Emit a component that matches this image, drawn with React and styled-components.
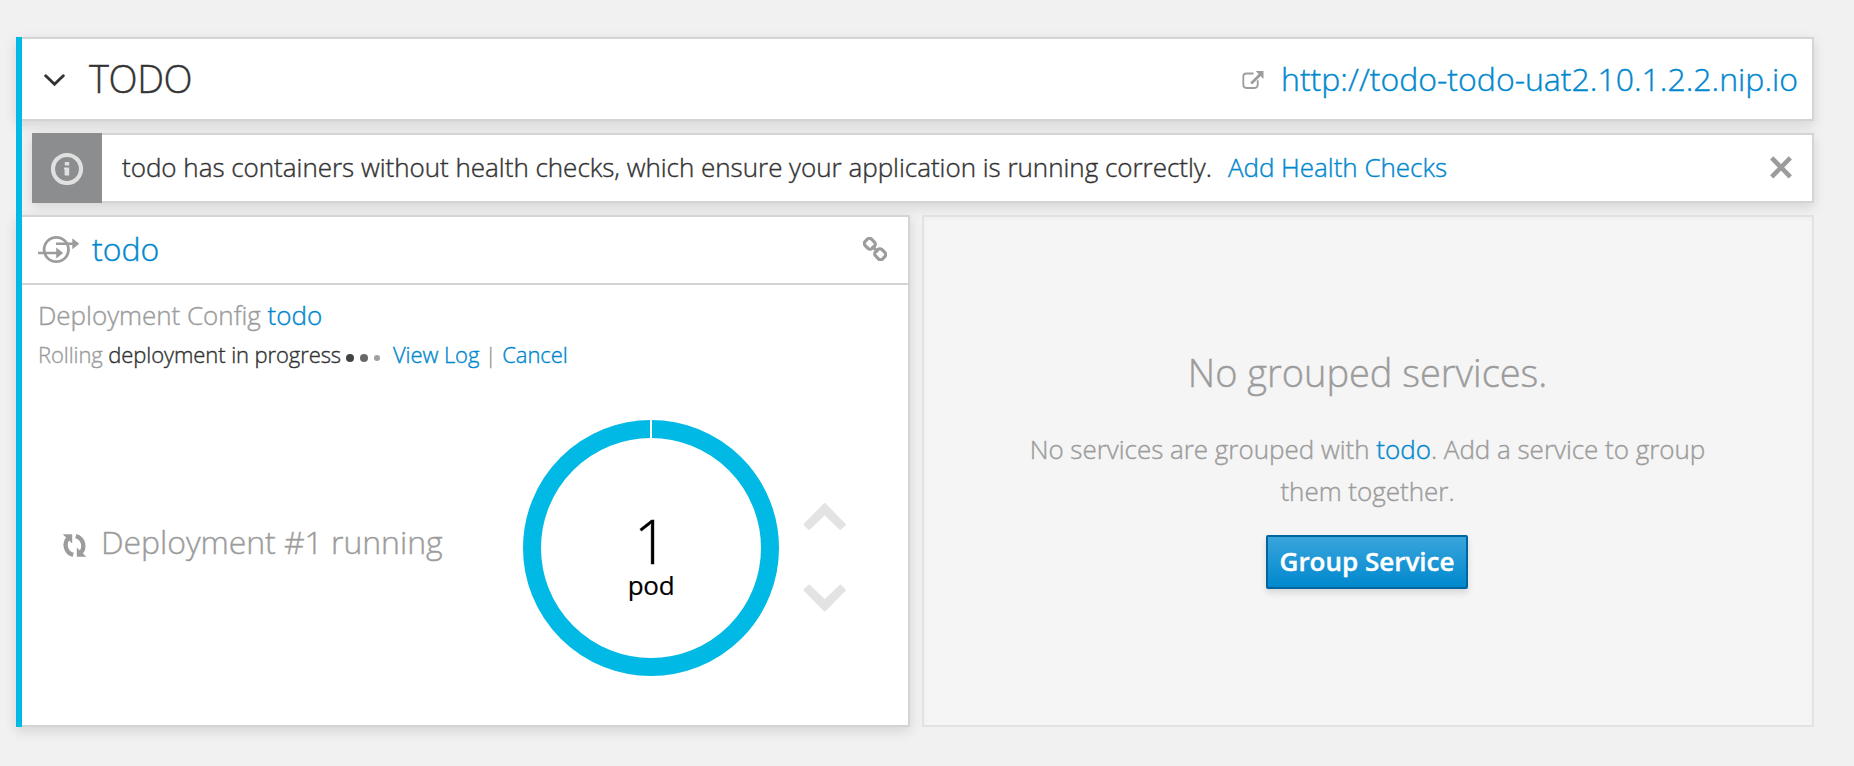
import React from 'react';
import styled, { createGlobalStyle } from 'styled-components';

const GlobalStyle = createGlobalStyle`
  *, *::before { box-sizing: border-box; }
  body {
    margin: 0;
    background: #f1f1f1;
    color: #333;
    font-family: "Open Sans", sans-serif;
    font-size: 26px;
    font-weight: 300;
    letter-spacing: -0.02px;
    -webkit-text-stroke: 0.4px currentColor;
  }
`;

const Page = styled.main`
  height: 766px;
  padding: 37px 40px 0 16px;
  overflow: hidden;
`;

const ServiceGroup = styled.section`
  position: relative;
  display: flex;
  flex-direction: column;
  gap: 12px;
  height: 690px;
  &::before {
    content: "";
    position: absolute;
    z-index: 1;
    inset: 0 auto 0 0;
    width: 6px;
    background: #00b9e4;
  }
`;

const Panel = styled.div`
  background: #fff;
  border: 2px solid #d3d4d4;
  box-shadow: 0 4px 12px rgba(3, 3, 3, 0.12);
`;

const GroupHeader = styled(Panel)`
  display: flex;
  align-items: center;
  height: 84px;
  flex: none;
  padding: 0 14px 0 26px;
`;

const GroupTitle = styled.h2`
  margin: 0 auto 0 24px;
  padding-bottom: 2px;
  font-size: 38px;
  font-weight: 300;
  letter-spacing: -0.4px;
  line-height: 52px;
`;

const Link = styled.a`
  color: #0088ce;
  text-decoration: none;
  white-space: nowrap;
`;

const RouteLink = styled(Link)`
  margin-left: 17px;
  font-size: 32px;
  letter-spacing: 0;
  line-height: 44px;
  padding-bottom: 1px;
`;

const Alert = styled(Panel)`
  display: flex;
  align-items: center;
  height: 70px;
  flex: none;
  margin-left: 16px;
  border-left: 0;
  padding-right: 20px;
`;

const AlertIcon = styled.div`
  display: grid;
  place-items: center;
  width: 70px;
  height: 70px;
  flex: none;
  background: #8b8d8f;
`;

const AlertText = styled.p`
  margin: 0 auto 0 20px;
  line-height: 36px;
  padding-bottom: 2px;
  white-space: nowrap;
  ${Link} { margin-left: 16px; }
`;

const CloseButton = styled.button`
  display: flex;
  padding: 0;
  border: 0;
  background: none;
  color: #9c9c9c;
`;

const Tiles = styled.div`
  display: grid;
  grid-template-columns: 894px 892px;
  gap: 12px;
  flex: 1;
`;

const ServiceTile = styled(Panel)`
  display: flex;
  flex-direction: column;
`;

const TileHeader = styled.header`
  display: flex;
  align-items: center;
  height: 68px;
  padding: 0 21px 2px 20px;
  border-bottom: 2px solid #d3d4d4;
`;

const TileTitle = styled.h3`
  margin: 0 auto 0 12px;
  font-size: 32px;
  font-weight: 300;
  line-height: 44px;
`;

const TileBody = styled.div`
  padding: 15px 20px 0;
`;

const Muted = styled.span`
  color: #9c9c9c;
`;

const ConfigLine = styled.div`
  line-height: 30px;
  white-space: nowrap;
`;

const StatusLine = styled.div`
  display: flex;
  align-items: center;
  margin-top: 9px;
  font-size: 22px;
  letter-spacing: -0.09px;
  line-height: 30px;
  white-space: pre;
`;

const Dots = styled.div`
  display: flex;
  align-items: center;
  gap: 6px;
  margin: 8px 13px 0 5px;
`;

const Dot = styled.i`
  width: ${p => p.$size}px;
  height: ${p => p.$size}px;
  border-radius: 50%;
  background: ${p => p.$color};
`;

const DeploymentRow = styled.div`
  display: grid;
  grid-template-columns: 485px 256px 43px;
  height: 256px;
  margin-top: 51px;
`;

const DeploymentStatus = styled.div`
  display: flex;
  align-items: center;
  padding: 0 0 12px 24px;
  gap: 14px;
  color: #9c9c9c;
  font-size: 32px;
  letter-spacing: -0.06px;
  line-height: 44px;
  white-space: nowrap;
  svg { margin-top: 6px; }
`;

const PodDonut = styled.div`
  position: relative;
  padding-top: 91px;
  color: #000;
  text-align: center;
`;

const Ring = styled.svg`
  position: absolute;
  inset: 0;
`;

const PodCount = styled.div`
  font-size: 60px;
  line-height: 60px;
`;

const PodLabel = styled.div`
  font-size: 26px;
  font-weight: 400;
  letter-spacing: -0.3px;
  line-height: 28px;
  -webkit-text-stroke: 0.2px currentColor;
`;

const Scaler = styled.div`
  display: flex;
  flex-direction: column;
  justify-content: space-between;
  height: 110px;
  margin: 82px 0 0 24px;
  color: #e3e3e3;
`;

const EmptyTile = styled.div`
  display: flex;
  flex-direction: column;
  align-items: center;
  padding: 134px 1px 0 0;
  border: 2px solid #e2e2e2;
  background: #f5f5f5;
  box-shadow: inset 0 2px 4px rgba(3, 3, 3, 0.03);
  color: #9c9c9c;
  text-align: center;
`;

const EmptyTitle = styled.h3`
  margin: 0 0 35px;
  font-size: 38px;
  font-weight: 300;
  line-height: 42px;
`;

const EmptyText = styled.p`
  width: 720px;
  margin: 0 0 23px;
  line-height: 42px;
`;

const PrimaryButton = styled.button`
  width: 202px;
  height: 54px;
  margin-right: 1px;
  padding: 0 0 3px;
  border: 2px solid #00659c;
  border-radius: 2px;
  background: linear-gradient(#39a5dc, #0088ce);
  box-shadow: 0 4px 6px rgba(3, 3, 3, 0.12);
  color: #fff;
  font: 600 26px/36px "Open Sans", sans-serif;
  white-space: nowrap;
`;

const ToggleIcon = () => (
  <svg width="21" height="14" viewBox="0 0 21 14" fill="none" stroke="#333" strokeWidth="2.9" strokeLinecap="round">
    <path d="M1.7 3.8l8.8 8.4 8.8-8.4" />
  </svg>
);

const ExternalIcon = () => (
  <svg width="23" height="20" viewBox="0 0 23 20" fill="none" stroke="#9c9c9c" strokeWidth="1.8">
    <path d="M12.5 4.5h-7Q2.3 4.5 2.3 7.7v8.1q0 3.2 3.2 3.2h8q3.2 0 3.2-3.2v-4.5" />
    <path d="M10.2 14.5L20 4.8" strokeWidth="2.8" />
    <path d="M14.7 2.1h7.8v7.8z" fill="#9c9c9c" stroke="none" />
  </svg>
);

const InfoIcon = () => (
  <svg width="34" height="34" viewBox="0 0 34 34">
    <circle cx="17" cy="18" r="14" fill="none" stroke="#e0e0e0" strokeWidth="4.2" />
    <path d="M14.8 11h4.4v3.6h-4.4zM14 16.4h5.2v8.2h-4.6v-6h-.6z" fill="#e0e0e0" />
  </svg>
);

const CloseIcon = () => (
  <svg width="22" height="24" viewBox="0 0 22 24" stroke="currentColor" strokeWidth="4.6">
    <path d="M1.7 1.9l18.6 19M20.3 1.9l-18.6 19" />
  </svg>
);

const ServiceIcon = () => (
  <svg width="42" height="30" viewBox="38 235.5 42 30" fill="none" stroke="#9c9c9c" strokeWidth="2.8">
    <circle cx="56.3" cy="251" r="12.2" />
    <path d="M56 245.3h17M38 254.5h20" strokeWidth="2.5" />
    <path d="M72.3 239.8l7 5.5-7 5.5zM56.2 249l7 5.5-7 5.5z" fill="#9c9c9c" stroke="none" />
  </svg>
);

const ChainIcon = () => (
  <svg width="24" height="24" viewBox="0 0 24 24" fill="none" stroke="#9c9c9c" strokeWidth="3.2">
    <rect x="1.8" y="2.3" width="10" height="9" rx="3" transform="rotate(45 6.8 6.8)" />
    <rect x="12.2" y="12.7" width="10" height="9" rx="3" transform="rotate(45 17.2 17.2)" />
    <path d="M9 9l6 6" strokeWidth="3" />
  </svg>
);

const RefreshIcon = () => (
  <svg width="25" height="25" viewBox="62.5 532.5 25 25" fill="none" stroke="#9c9c9c" strokeWidth="4.3">
    <path d="M73.7 554.4A10.2 10.2 0 0 1 69.5 537M76.3 535.6A10.2 10.2 0 0 1 80.5 553" />
    <path d="M63.2 533.7h9.5v9.2zM86.8 556.3h-9.5v-9.2z" fill="#9c9c9c" stroke="none" />
  </svg>
);

const ScaleUpIcon = () => (
  <svg width="44" height="29" viewBox="0 0 44 29" fill="currentColor" stroke="currentColor" strokeWidth="2" strokeLinejoin="round">
    <path d="M21.7 2L41.9 22.5 37.2 26.9 21.7 12 6.2 26.9 1.5 22.5z" />
  </svg>
);

const ScaleDownIcon = () => (
  <svg width="44" height="29" viewBox="0 0 44 29" fill="currentColor" stroke="currentColor" strokeWidth="2" strokeLinejoin="round">
    <path d="M21.7 27.5L41.9 7 37.2 2.6 21.7 17.5 6.2 2.6 1.5 7z" />
  </svg>
);

export default function App() {
  return (
    <>
      <GlobalStyle />
      <Page>
        <ServiceGroup>
          <GroupHeader>
            <ToggleIcon />
            <GroupTitle>TODO</GroupTitle>
            <ExternalIcon />
            <RouteLink>http://todo-todo-uat2.10.1.2.2.nip.io</RouteLink>
          </GroupHeader>
          <Alert>
            <AlertIcon><InfoIcon /></AlertIcon>
            <AlertText>
              todo has containers without health checks, which ensure your application is running correctly.
              <Link>Add Health Checks</Link>
            </AlertText>
            <CloseButton aria-label="Close"><CloseIcon /></CloseButton>
          </Alert>
          <Tiles>
            <ServiceTile>
              <TileHeader>
                <ServiceIcon />
                <TileTitle><Link>todo</Link></TileTitle>
                <ChainIcon />
              </TileHeader>
              <TileBody>
                <ConfigLine><Muted>Deployment Config</Muted> <Link>todo</Link></ConfigLine>
                <StatusLine>
                  <Muted>Rolling </Muted>
                  <span>deployment in progress</span>
                  <Dots>
                    <Dot $size={8} $color="#424242" />
                    <Dot $size={8} $color="#686868" />
                    <Dot $size={6} $color="#9f9f9f" />
                  </Dots>
                  <Link>View Log</Link>
                  <Muted> | </Muted>
                  <Link>Cancel</Link>
                </StatusLine>
                <DeploymentRow>
                  <DeploymentStatus><RefreshIcon />Deployment #1 running</DeploymentStatus>
                  <PodDonut>
                    <Ring width="256" height="256" viewBox="0 0 256 256">
                      <circle cx="128" cy="128" r="119" fill="none" stroke="#00b9e4" strokeWidth="18" />
                      <path d="M128 0v18.5" stroke="#fff" strokeWidth="2" />
                    </Ring>
                    <PodCount>1</PodCount>
                    <PodLabel>pod</PodLabel>
                  </PodDonut>
                  <Scaler><ScaleUpIcon /><ScaleDownIcon /></Scaler>
                </DeploymentRow>
              </TileBody>
            </ServiceTile>
            <EmptyTile>
              <EmptyTitle>No grouped services.</EmptyTitle>
              <EmptyText>
                No services are grouped with <Link>todo</Link>. Add a service to group them together.
              </EmptyText>
              <PrimaryButton>Group Service</PrimaryButton>
            </EmptyTile>
          </Tiles>
        </ServiceGroup>
      </Page>
    </>
  );
}
